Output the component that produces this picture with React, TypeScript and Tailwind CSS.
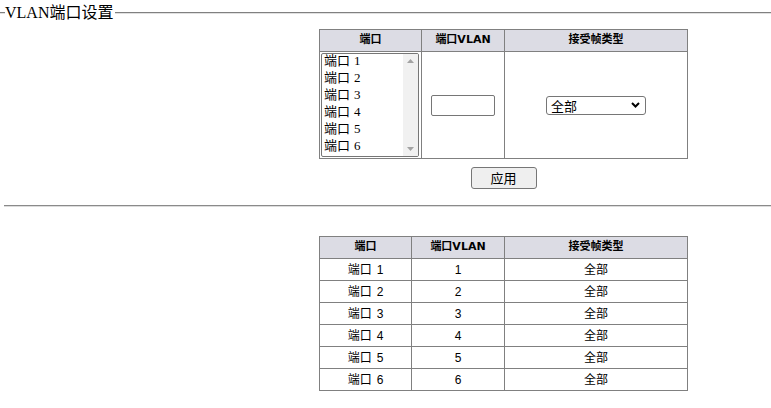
const ports = [1, 2, 3, 4, 5, 6];

function ListBox() {
  return (
    <div className="flex h-[104px] w-[98px] overflow-hidden rounded-[2px] border border-[#767676] bg-white">
      <div className="-mt-[2px] flex-1 pl-[2px] font-['Liberation_Serif','Noto_Sans_CJK_SC',serif] text-[13px] text-black">
        {ports.map((p) => (
          <div key={p} className="flex h-[17px] items-center whitespace-nowrap leading-[17px]">
            <span>端口</span>
            <span className="ml-[4px]">{p}</span>
          </div>
        ))}
      </div>
      <div className="flex w-[15px] flex-col items-center justify-between bg-[#f1f1f1] py-[5px]">
        <svg width="7" height="4" viewBox="0 0 7 4">
          <path d="M0 4 L3.5 0 L7 4 Z" fill="#a3a3a3" />
        </svg>
        <svg width="7" height="4" viewBox="0 0 7 4">
          <path d="M0 0 L3.5 4 L7 0 Z" fill="#a3a3a3" />
        </svg>
      </div>
    </div>
  );
}

export default function App() {
  const th =
    "h-[22px] border border-[#808080] bg-[#dcdce4] p-0 text-center font-['DejaVu_Sans','Noto_Sans_CJK_SC',sans-serif] text-[11px] font-bold text-black";
  const td =
    "h-[22px] border border-[#808080] p-0 text-center font-['Liberation_Sans','Noto_Sans_CJK_SC',sans-serif] text-[12px] text-black";

  return (
    <div className="w-[771px] overflow-hidden bg-white pt-[4px] text-black">
      {/* legend */}
      <div className="flex h-[18px] items-center">
        <div className="h-[2px] w-[5px] border-t border-b border-t-[#808080] border-b-[#e0e0e0]" />
        <span className="font-['Liberation_Serif','Noto_Sans_CJK_SC',serif] text-[16px] leading-[18px]">
          VLAN端口设置
        </span>
        <div className="ml-[2px] h-[2px] flex-1 border-t border-b border-t-[#808080] border-b-[#e0e0e0]" />
      </div>

      <div className="pl-[319px] pt-[7px]">
        <table className="w-[369px] table-fixed border-collapse">
          <thead>
            <tr>
              <th className={th + " w-[102px]"}>端口</th>
              <th className={th + " w-[83px]"}>端口VLAN</th>
              <th className={th}>接受帧类型</th>
            </tr>
          </thead>
          <tbody>
            <tr>
              <td className="h-[107px] border border-[#808080] p-0 pl-[1px]">
                <ListBox />
              </td>
              <td className="border border-[#808080] p-0">
                <div className="flex justify-center">
                  <div className="h-[21px] w-[64px] rounded-[2px] border border-[#767676] bg-white" />
                </div>
              </td>
              <td className="border border-[#808080] p-0">
                <div className="flex justify-center">
                  <div className="flex h-[19px] w-[100px] items-center justify-between rounded-[3px] border border-[#767676] bg-white pl-[4px] pr-[5px] font-['Noto_Sans_CJK_SC',sans-serif] text-[13px]">
                    <span className="leading-[17px]">全部</span>
                    <svg width="9" height="6" viewBox="0 0 9 6">
                      <path d="M1 1 L4.5 4.5 L8 1" fill="none" stroke="#000" strokeWidth="2" />
                    </svg>
                  </div>
                </div>
              </td>
            </tr>
          </tbody>
        </table>
        <div className="flex w-[369px] justify-center pt-[8px]">
          <button className="h-[22px] w-[66px] rounded-[3px] border border-[#767676] bg-[#efefef] font-['Noto_Sans_CJK_SC',sans-serif] text-[13px] leading-[18px] text-black">
            应用
          </button>
        </div>
      </div>

      <div className="ml-[4px] mt-[16px] h-[2px] border-t border-b border-t-[#8a8a8a] border-b-[#dcdcdc]" />

      <div className="pl-[319px] pt-[29px]">
        <table className="w-[369px] table-fixed border-collapse">
          <thead>
            <tr>
              <th className={th + " w-[92px]"}>端口</th>
              <th className={th + " w-[93px]"}>端口VLAN</th>
              <th className={th}>接受帧类型</th>
            </tr>
          </thead>
          <tbody>
            {ports.map((p) => (
              <tr key={p}>
                <td className={td}>
                  端口<span className="ml-[5px]">{p}</span>
                </td>
                <td className={td}>{p}</td>
                <td className={td}>全部</td>
              </tr>
            ))}
          </tbody>
        </table>
      </div>
    </div>
  );
}
